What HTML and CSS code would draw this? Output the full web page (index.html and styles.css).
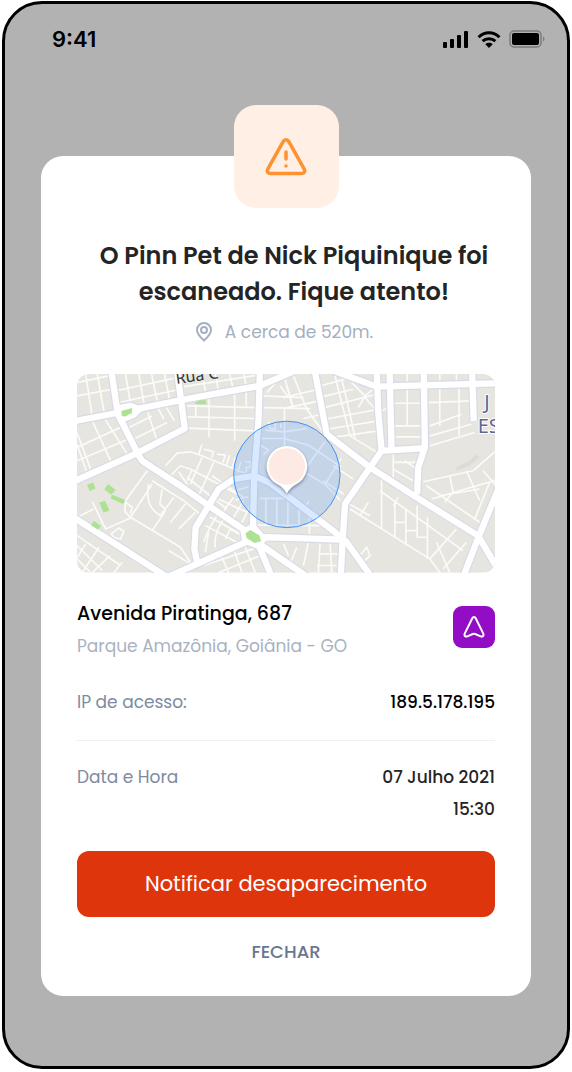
FILE: index.html
```html
<!DOCTYPE html>
<html lang="pt-BR">
<head>
    <meta charset="UTF-8">
    <meta name="viewport" content="width=device-width, initial-scale=1.0">
    <title>Pinn Pet</title>
    <link rel="stylesheet" href="styles.css">
</head>
<body>
    <div class="phone">
        <header class="status-bar">
            <span class="time">9:41</span>
            <div class="status-icons">
                <svg width="26" height="17" viewBox="0 0 26 17">
                    <rect x="0" y="11" width="4" height="6" rx="1"/>
                    <rect x="7" y="8" width="4" height="9" rx="1"/>
                    <rect x="14" y="4" width="4" height="13" rx="1"/>
                    <rect x="21" y="0" width="4" height="17" rx="1"/>
                </svg>
                <svg width="24" height="17" viewBox="0 0 24 17" fill="none" stroke="#000" stroke-width="3">
                    <path d="M1.600 6.200C7.400.4 16.600.4 22.400 6.200"/>
                    <path d="M5.600 10.200C9.200 6.800 14.800 6.800 18.400 10.200"/>
                    <path d="M8.300 13.200C10.400 11.300 13.600 11.300 15.700 13.200L12 17Z" fill="#000" stroke="none"/>
                </svg>
                <svg width="36" height="18" viewBox="0 0 36 18">
                    <rect x="1" y="1" width="31" height="16" rx="4" fill="none" stroke="#7b7b7b" stroke-width="1.500"/>
                    <rect x="3" y="3" width="27" height="12" rx="2"/>
                    <path d="M34 6.500C36 7.500 36 10.500 34 11.500Z" fill="#7b7b7b"/>
                </svg>
            </div>
        </header>

        <main class="modal">
            <div class="alert-badge">
                <svg width="44" height="40" viewBox="0 0 44 40" fill="none" stroke="#ff9230" stroke-width="3.500" stroke-linecap="round" stroke-linejoin="round">
                    <path d="M19 4.800 3.900 31.800C2.300 34.600 4 36.500 6.600 36.500H37.400C40 36.500 41.700 34.600 40.100 31.800L25 4.800C23.500 2.100 20.500 2.100 19 4.800Z"/>
                    <path d="M22 15V22M22 29V29.100"/>
                </svg>
            </div>

            <h1 class="title">O Pinn Pet de Nick Piquinique foi escaneado. Fique atento!</h1>

            <p class="distance">
                <svg width="18" height="20" viewBox="0 0 18 20" fill="none" stroke="#a5afbf" stroke-width="2">
                    <path d="M9 18.600C5 15 2 11.800 2 8A7 7 0 0 1 16 8C16 11.800 13 15 9 18.600Z"/>
                    <circle cx="9" cy="8" r="3"/>
                </svg>
                <span>A cerca de 520m.</span>
            </p>

            <svg class="map" viewBox="19 24 1257 597" preserveAspectRatio="xMidYMid slice" role="img" aria-label="Mapa">
                <defs>
                    <g id="avenues">
                        <path d="M122 10 135 100 142 145 170 200 205 270 217 287 330 360 412 418 525 495 575 540 720 640"/>
                        <path d="M10 166 135 142 205 128 330 103 440 82 568 60 670 16"/>
                        <path d="M140 128 180 120 206 130 190 146 155 160"/>
                        <path d="M319 10 332 103 343 188 200 262 10 347"/>
                        <path d="M569 10 565 160 552 330 548 495"/>
                        <path d="M10 456 150 545 290 635"/>
                        <path d="M280 640 380 595 530 528M380 590 372 550 376 485 412 425 445 370 490 340 552 330 600 352 660 397 730 450 795 500 830 530 905 635"/>
                        <path d="M560 525 605 635M580 515 660 517 815 522"/>
                        <path d="M733 10 770 205 900 305 1040 395 1225 510 1290 620"/>
                        <path d="M790 14 920 62 1290 52"/>
                        <path d="M920 10 925 140 935 255M959 10 965 250M1062 10 1065 245 1045 305 1042 385"/>
                        <path d="M1065 247 935 255 900 305 825 415 818 520 812 635"/>
                        <path d="M1207 10 1212 165M1290 360 1230 505 1180 635"/>
                        <path d="M520 498 548 484 580 520 562 540 525 525Z"/>
                    </g>
                </defs>
                <rect x="19" y="24" width="1257" height="597" fill="#e6e5e0"/>

                <g class="streets">
                    <path d="M19 90 125 70M19 50 120 28M45 24 65 155M80 24 102 147M130 76 320 35M135 112 328 70M165 24 180 115M205 24 222 122M243 24 262 112M282 24 298 105"/>
                    <path d="M165 190 245 150M180 225 290 170M232 140 260 225M262 125 280 160M285 120 312 165M65 165 120 285M100 155 170 265M19 245 160 180M19 285 178 218M19 200 60 310M19 235 50 325"/>
                    <path d="M340 62 560 28M395 24 408 90M435 24 445 80M478 24 490 75M520 24 530 68M350 120 560 125M350 153 560 158M350 187 560 195M376 95V150M416 90V215M493 75V225M528 65V120"/>
                    <path d="M285 300 320 262 360 258 400 272 530 325M385 265 395 236M400 250 430 258 424 275M440 265 465 268 458 290M478 268 468 300M495 275 485 310M512 288 503 318M525 288H540V305H528V320"/>
                    <path d="M300 330 330 300 365 312 350 345M325 318 352 358M360 355 395 275M385 390 430 290M360 310 500 385M350 335 470 430M425 330 520 395M445 400 530 440M460 435 490 395M490 455 520 405M515 470 540 420"/>
                    <path d="M230 315 165 405 163 438 180 455 330 545 360 590M245 345 340 405 395 450M235 355C225 400 235 430 270 450M275 370 268 415 285 430M180 455 245 355M270 450 310 395M300 470 345 415M325 490 375 440M245 495 285 435M165 410 185 425 180 445M295 555 365 598"/>
                    <path d="M65 408 105 490 185 455M19 455 70 430M122 505 145 487 160 497 150 520 130 515ZM19 510 150 600M19 540 95 615M45 535 20 575M85 545 35 621M118 570 65 621M155 590 130 621M19 580 60 621"/>
                    <path d="M400 530C410 500 420 480 440 450M435 545C430 510 445 480 465 455M465 520 480 490 515 510M420 455 510 505M405 480 500 530M415 500 405 560M450 565 475 621M490 550 515 621M525 545 555 621M400 600 550 550M445 621 570 570"/>
                    <path d="M575 90 700 95M580 125 720 128M640 24 670 130M590 80 640 24M643 130V250M575 218H640L715 238 813 303M585 193 640 198 710 188M595 168 600 188 615 190V168M632 188V172M570 238 595 253 580 266M765 228 710 303M813 278 765 356M710 323 765 356 810 403"/>
                    <path d="M570 398H680M587 398V478M620 398V483M653 400V483M687 423V478M705 423 717 406M500 373 535 363M495 403 535 393M560 478 760 480M718 450V510"/>
                    <path d="M640 95 745 70M650 125 750 105M700 158 755 145M650 60 670 130M670 30 710 130 760 200M630 60 655 95"/>
                    <path d="M750 60 830 38M757 92 850 70M762 125 920 85M765 160 925 130M770 190 925 165M785 215 925 195M815 40 830 100 855 215M795 30 840 210 930 265M845 50 885 90 865 125M885 95 925 140 950 128M885 90 915 65"/>
                    <path d="M975 112H1060M975 180H1060M975 213H1060M1012 24V180M1110 24V130M1160 24V55M1075 110 1205 105M1080 180 1175 145M1080 210 1205 175M1080 240 1215 200M1168 60V210M1110 70V180"/>
                    <path d="M970 265V350M970 290H1040M970 310 1030 345M1005 285 1040 310M1060 348 1210 315 1290 245M1070 360 1230 470M1110 390 1230 370M1140 330 1150 380M1190 315 1230 405M1085 400 1290 340M1215 460 1260 350M1240 315 1290 370M1125 410 1145 385"/>
                    <path d="M840 430 1080 580M830 410 900 450M895 410 870 450M935 340V488M930 375 1180 555M975 410V515M1008 430V540M1042 420V515M1073 455V580M975 470H1005M1008 495H1040M1042 515H1073M1080 580 1160 490M1100 530 1140 621M1080 580 1110 621M1190 530 1120 610M985 395 970 420"/>
                    <path d="M870 570 890 545 900 570 880 590M680 545 660 595M715 530 700 600M750 530 745 621M780 530 785 621M640 535 655 570M745 565H810M740 600H800M850 340 790 300M820 385 760 345"/>
                </g>
                <use href="#avenues" class="avenue-edge"/>
                <use href="#avenues" class="avenue"/>
                <path d="M1045 410 1190 500" fill="none" stroke="#e8e8ee" stroke-width="2"/>

                <g fill="#ade293">
                    <path d="M152 135 185 126 184 141 164 152 154 150Z"/>
                    <path d="M373 110 390 103H407L408 115H373Z"/>
                    <path d="M49 358 67 350 75 368 57 376ZM112 355 135 372 122 387 101 371ZM125 387 164 403 157 415 120 398ZM86 411 103 405 117 434 99 441ZM70 465 92 482 81 492 61 479Z"/>
                    <path d="M526 503 540 493 567 509 573 527 553 532 529 517Z"/>
                </g>
                <path d="M1158 305 1200 285 1220 265 1228 276 1200 300 1160 315Z" fill="#dedbd2"/>

                <text class="street-name" x="318" y="54" transform="rotate(-8 318 54)">Rua C</text>
                <text class="district" x="1244" y="128">J</text>
                <text class="district" x="1224" y="202">ES</text>

                <circle cx="650" cy="326" r="160" fill="#4191ff" fill-opacity=".2" stroke="#4191f5" stroke-width="3"/>
                <path class="pin" d="M650 383C642 370 634 363 624 357A61 61 0 1 1 676 357C666 363 658 370 650 383Z"/>
                <circle cx="650" cy="302" r="55" fill="#feeae5"/>
            </svg>

            <section class="address">
                <div>
                    <h2 class="street">Avenida Piratinga, 687</h2>
                    <p class="city">Parque Amazônia, Goiânia - GO</p>
                </div>
                <button type="button" class="navigate" aria-label="Abrir rota">
                    <svg width="24" height="24" viewBox="0 0 24 24" fill="none" stroke="#fff" stroke-width="2" stroke-linejoin="round">
                        <path d="M10.300 3.300 2.700 18.600C1.800 20.600 3.400 22.200 5.400 21.300L10.800 19Q12 18.500 13.200 19L18.600 21.300C20.600 22.200 22.200 20.600 21.300 18.600L13.700 3.300C12.900 1.600 11.100 1.600 10.300 3.300Z"/>
                    </svg>
                </button>
            </section>

            <dl class="details">
                <div class="row">
                    <dt>IP de acesso:</dt>
                    <dd class="ip">189.5.178.195</dd>
                </div>
                <div class="row">
                    <dt>Data e Hora</dt>
                    <dd>07 Julho 2021<br>15:30</dd>
                </div>
            </dl>

            <button type="button" class="notify">Notificar desaparecimento</button>
            <button type="button" class="close">FECHAR</button>
        </main>
    </div>
</body>
</html>
```

FILE: styles.css
```css
* {
    margin: 0;
    padding: 0;
    box-sizing: border-box;
}
body {
    font-family: Poppins, Inter, sans-serif;
    background: white;
    min-height: 100vh;
    padding: 1px 2px 3px;
    display: flex;
}
button {
    font-family: inherit;
    border: none;
    cursor: pointer;
}
.phone {
    flex: 1;
    background: #b2b2b2;
    border: 3px solid #000;
    border-radius: 40px;
    padding-bottom: 64px;
}
.status-bar {
    display: flex;
    justify-content: space-between;
    align-items: center;
    height: 70px;
    padding: 0 22px 0 47px;
}
.time {
    font-family: Inter, sans-serif;
    font-size: 22px;
    font-weight: 600;
}
.status-icons {
    display: flex;
    align-items: center;
    gap: 8px;
}
.modal {
    display: flex;
    flex-direction: column;
    margin: 82px 36px 0;
    padding: 0 36px 28px;
    background: white;
    border-radius: 22px;
}
.alert-badge {
    display: flex;
    align-items: center;
    justify-content: center;
    align-self: center;
    width: 105px;
    height: 103px;
    margin-top: -51px;
    background: #ffefe4;
    border-radius: 22px;
}
.title {
    margin-top: 30px;
    padding-left: 16px;
    color: #242424;
    font-size: 24px;
    font-weight: 600;
    line-height: 36px;
    text-align: center;
}
.distance {
    display: flex;
    align-items: center;
    justify-content: center;
    gap: 12px;
    margin-top: 8px;
    padding-right: 4px;
    color: #a5afbf;
    font-size: 17px;
    line-height: 28px;
}
.map {
    width: 100%;
    margin-top: 28px;
    border-radius: 12px;
}
.streets {
    fill: none;
    stroke: #fbfbfa;
    stroke-width: 5;
    stroke-linejoin: round;
}
.avenue-edge,
.avenue {
    fill: none;
    stroke: #d8dae8;
    stroke-width: 26;
    stroke-linejoin: round;
}
.avenue {
    stroke: white;
    stroke-width: 19;
}
.street-name {
    font-family: "Noto Sans", sans-serif;
    font-size: 48px;
    fill: #333;
}
.district {
    font-family: "Noto Sans", sans-serif;
    font-size: 60px;
    fill: #5c6694;
    stroke: white;
    stroke-width: 6;
    paint-order: stroke;
}
.pin {
    fill: white;
    filter: drop-shadow(0 5px 5px rgba(40, 60, 90, 0.5));
}
.address {
    display: flex;
    align-items: flex-start;
    justify-content: space-between;
    margin-top: 25px;
}
.street {
    color: #000;
    font-size: 19px;
    font-weight: 500;
    line-height: 32px;
}
.city {
    color: #a9b2c1;
    font-size: 17px;
    font-weight: 400;
    line-height: 32px;
}
.navigate {
    display: flex;
    align-items: center;
    justify-content: center;
    width: 42px;
    height: 42px;
    margin-top: 8px;
    background: #930cc6;
    border-radius: 9px;
}
.details {
    margin-top: 24px;
}
.row {
    display: flex;
    justify-content: space-between;
    font-size: 17px;
    line-height: 32px;
}
.row + .row {
    margin-top: 22px;
    padding-top: 20px;
    border-top: 1px solid #f0f0f0;
}
.row dt {
    color: #7d8ba1;
    font-weight: 400;
}
.row dd {
    color: #242424;
    font-weight: 500;
    text-align: right;
}
.row .ip {
    color: #000;
}
.notify {
    margin-top: 26px;
    padding: 17px;
    background: #df350d;
    border-radius: 12px;
    color: white;
    font-size: 21px;
    font-weight: 400;
    line-height: 32px;
}
.close {
    align-self: center;
    margin-top: 19px;
    background: none;
    color: #6b7791;
    font-size: 18px;
    font-weight: 500;
    line-height: 32px;
}
```
